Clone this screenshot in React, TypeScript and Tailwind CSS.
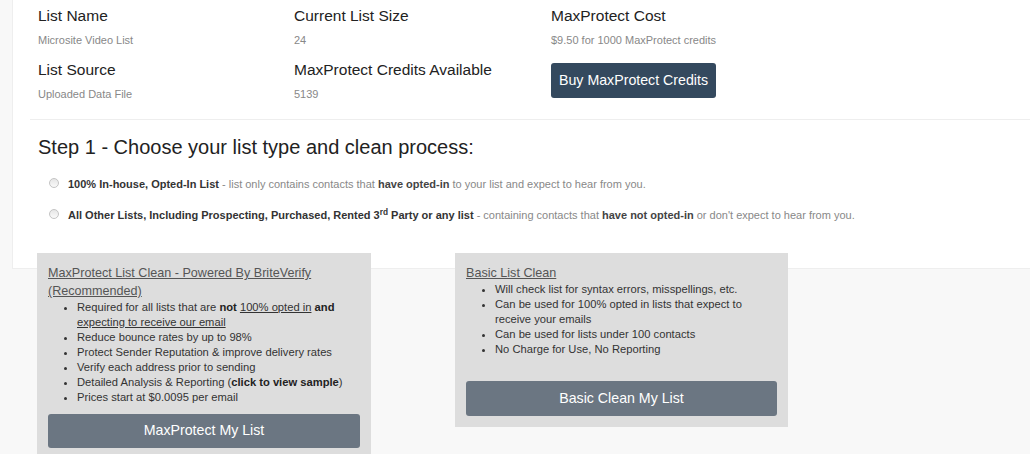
const font = { fontFamily: '"Liberation Sans", Arial, sans-serif' };

const InfoCell = ({ label, value }: { label: string; value: string }) => (
  <div className="h-[42px]">
    <div className="text-[15.5px] leading-[22px] text-[#222]">{label}</div>
    <div className="mt-[6px] text-[11px] leading-[14px] text-[#888]">{value}</div>
  </div>
);

const Radio = () => (
  <span className="h-[10px] w-[10px] shrink-0 rounded-full border border-[#c4c4c4] bg-gradient-to-b from-[#e6e6e6] to-[#fafafa]" />
);

const Bullets = ({ children }: { children: React.ReactNode }) => (
  <ul className="list-disc pl-[29px] text-[11.2px] leading-[15px] text-[#333]">{children}</ul>
);

export default function App() {
  return (
    <div className="min-h-[454px] w-[1030px] overflow-hidden bg-[#f8f8f8]" style={font}>
      <div className="ml-[12px] w-[1030px] border-b border-l border-[#eeeeee] bg-white pb-[45px] pt-[5px]">
        <div className="grid grid-cols-[256px_257px_256px] gap-y-[12px] pl-[25px]">
          <InfoCell label="List Name" value="Microsite Video List" />
          <InfoCell label="Current List Size" value="24" />
          <InfoCell label="MaxProtect Cost" value="$9.50 for 1000 MaxProtect credits" />
          <InfoCell label="List Source" value="Uploaded Data File" />
          <InfoCell label="MaxProtect Credits Available" value="5139" />
          <div className="h-[42px]">
            <button className="mt-[4px] h-[35px] rounded-[3px] bg-[#34495e] px-[8px] text-[14.2px] text-white">
              Buy MaxProtect Credits
            </button>
          </div>
        </div>

        <div className="ml-[17px] mt-[18px] border-t border-[#eeeeee]" />

        <div className="pl-[25px]">
          <h2 className="mt-[14px] text-[20px] leading-[26px] text-[#222]">
            Step 1 - Choose your list type and clean process:
          </h2>

          <div className="mt-[18px] flex flex-col gap-[17px] pl-[11px] text-[11px] leading-[16px] text-[#888]">
            <label className="flex items-start gap-[9px]">
              <Radio />
              <span className="-mt-[2px]">
                <b className="text-[#333]">100% In-house, Opted-In List</b> - list only contains contacts that{" "}
                <b className="text-[#444]">have opted-in</b> to your list and expect to hear from you.
              </span>
            </label>
            <label className="flex items-start gap-[9px]">
              <Radio />
              <span className="-mt-[2px]">
                <b className="text-[#333]">
                  All Other Lists, Including Prospecting, Purchased, Rented 3<sup>rd</sup> Party or any list
                </b>{" "}
                - containing contacts that <b className="text-[#444]">have not opted-in</b> or don't expect to hear
                from you.
              </span>
            </label>
          </div>
        </div>
      </div>

      <div className="-mt-[16px] ml-[37px] flex items-start gap-[84px]">
        <div className="w-[334px] bg-[#dddddd] p-[11px]">
          <div className="text-[12.6px] leading-[18px] text-[#555] underline">
            MaxProtect List Clean - Powered By BriteVerify (Recommended)
          </div>
          <Bullets>
            <li>
              Required for all lists that are <b className="text-[#222]">not</b>{" "}
              <span className="underline">100% opted in</span> <b className="text-[#222]">and</b>{" "}
              <span className="underline">expecting to receive our email</span>
            </li>
            <li>Reduce bounce rates by up to 98%</li>
            <li>Protect Sender Reputation &amp; improve delivery rates</li>
            <li>Verify each address prior to sending</li>
            <li>
              Detailed Analysis &amp; Reporting (<b className="text-[#222]">click to view sample</b>)
            </li>
            <li>Prices start at $0.0095 per email</li>
          </Bullets>
          <button className="mt-[9px] h-[34px] w-full rounded-[3px] bg-[#6b7682] text-[14.2px] text-white">
            MaxProtect My List
          </button>
        </div>

        <div className="w-[333px] bg-[#dddddd] p-[11px]">
          <div className="text-[12.6px] leading-[18px] text-[#555] underline">Basic List Clean</div>
          <Bullets>
            <li>Will check list for syntax errors, misspellings, etc.</li>
            <li>Can be used for 100% opted in lists that expect to receive your emails</li>
            <li>Can be used for lists under 100 contacts</li>
            <li>No Charge for Use, No Reporting</li>
          </Bullets>
          <button className="mt-[24px] h-[35px] w-full rounded-[3px] bg-[#6b7682] text-[14.2px] text-white">
            Basic Clean My List
          </button>
        </div>
      </div>
    </div>
  );
}
